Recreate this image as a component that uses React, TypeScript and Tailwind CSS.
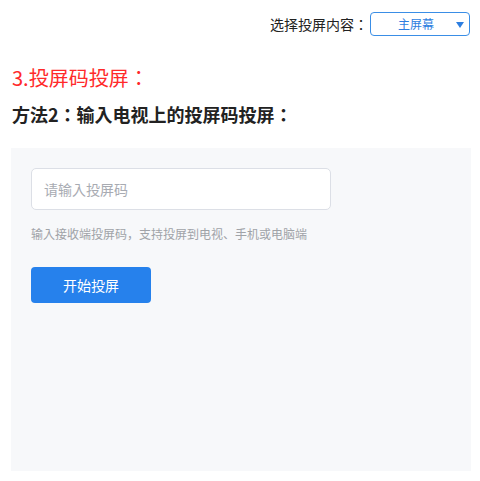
import React from "react";

export default function App() {
  const font = { fontFamily: '"Microsoft YaHei", "Noto Sans CJK JP", sans-serif' };
  return (
    <div className="w-[480px] h-[481px] bg-white overflow-hidden [text-spacing-trim:space-all]" style={font}>
      <div className="flex items-center justify-end pt-[12px] pr-[10px] gap-[2px]">
        <span className="text-[14px] text-[#222] leading-[24px]">选择投屏内容：</span>
        <div className="relative w-[100px] h-[24px] border border-[#3a8ee6] rounded-[4px] flex items-center justify-center pr-[8px]">
          <span className="text-[12px] text-[#2d7ee0] leading-none">主屏幕</span>
          <svg className="absolute right-[5px] top-[9px]" width="8" height="6" viewBox="0 0 8 6">
            <path d="M0 0 L8 0 L4 6 Z" fill="#2d7ee0" />
          </svg>
        </div>
      </div>
      <div className="pl-[12px] mt-[30px] text-[20px] text-[#ff2a2a] leading-[24px]">3.投屏码投屏：</div>
      <div className="pl-[12px] mt-[12px] text-[18px] font-bold text-[#222] leading-[24px]">方法2：输入电视上的投屏码投屏：</div>
      <div className="ml-[11px] mt-[22px] w-[460px] h-[323px] bg-[#f7f8fa] pt-[20px] pl-[20px]">
        <div className="w-[300px] h-[42px] bg-white border border-[#dcdfe6] rounded-[5px] flex items-center pl-[12px]">
          <span className="text-[14px] text-[#a8abb2]">请输入投屏码</span>
        </div>
        <div className="mt-[15px] text-[12px] text-[#a0a3a8] leading-[18px]">输入接收端投屏码，支持投屏到电视、手机或电脑端</div>
        <div className="mt-[24px] w-[120px] h-[36px] bg-[#2681ec] rounded-[4px] flex items-center justify-center text-white text-[14px]">开始投屏</div>
      </div>
    </div>
  );
}
